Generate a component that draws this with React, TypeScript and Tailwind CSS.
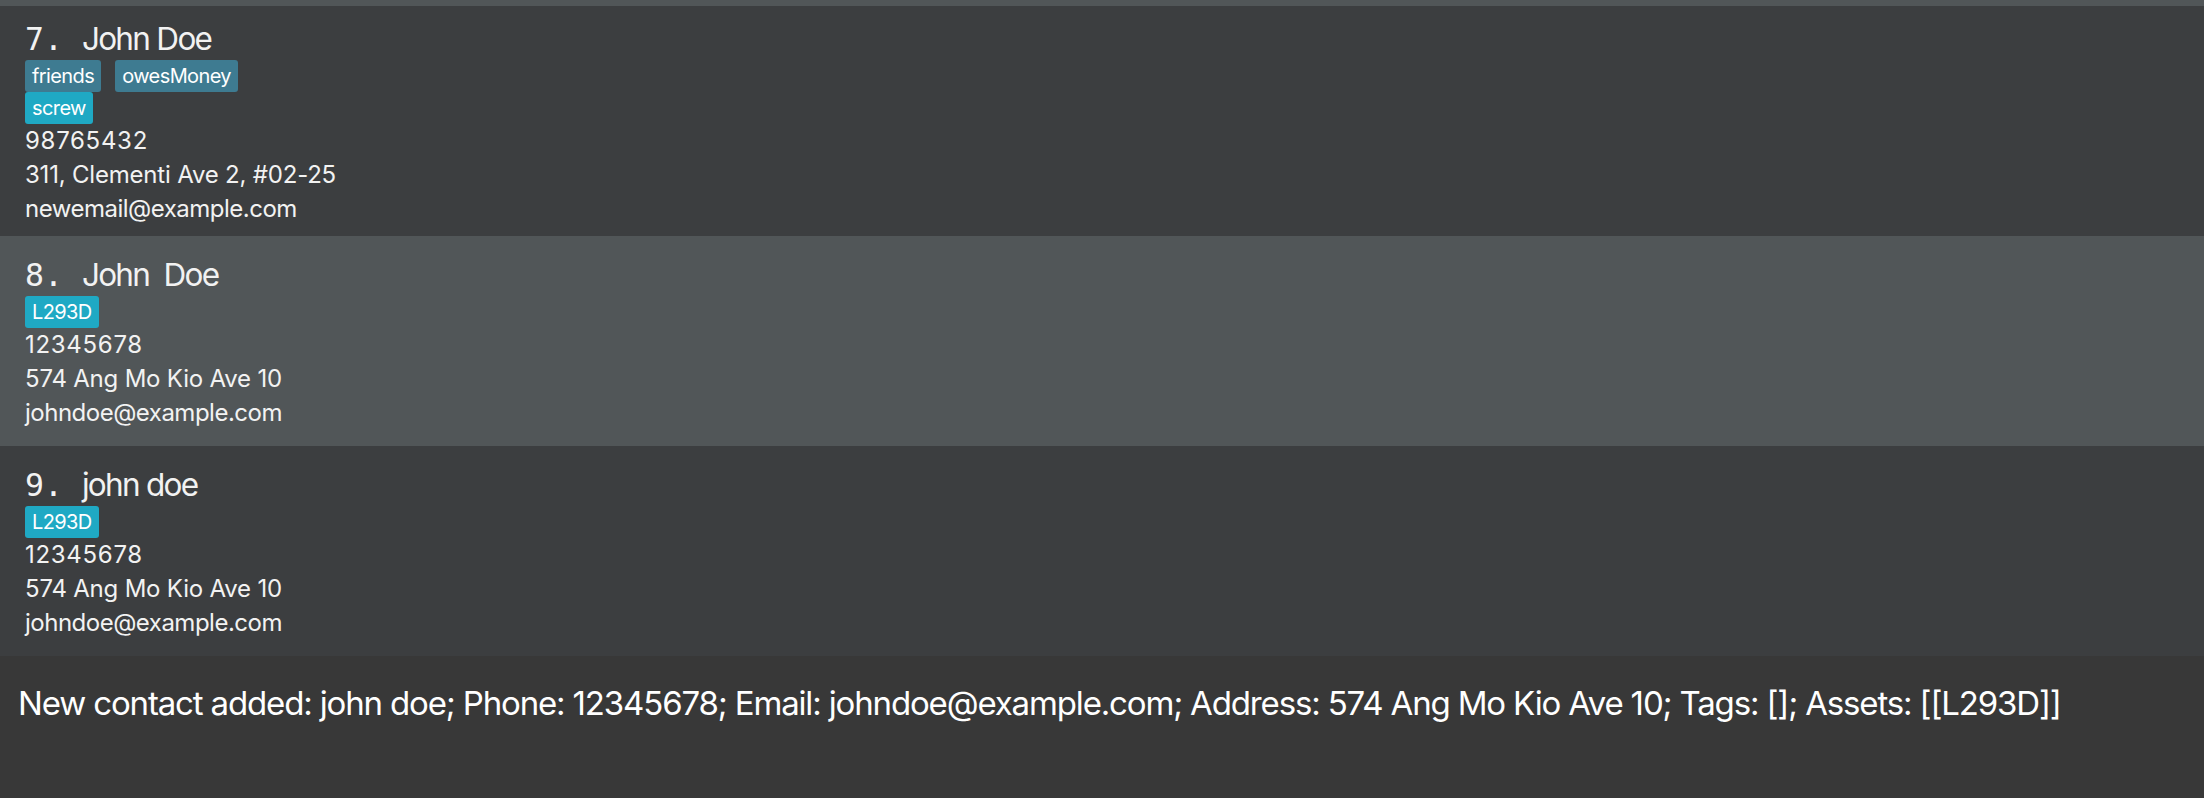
type Person = {
  id: number;
  name: string;
  tags: { label: string; kind: 'tag' | 'asset' }[][];
  phone: string;
  address: string;
  email: string;
};

const people: Person[] = [
  {
    id: 7,
    name: 'John Doe',
    tags: [
      [
        { label: 'friends', kind: 'tag' },
        { label: 'owesMoney', kind: 'tag' },
      ],
      [{ label: 'screw', kind: 'asset' }],
    ],
    phone: '98765432',
    address: '311, Clementi Ave 2, #02-25',
    email: 'newemail@example.com',
  },
  {
    id: 8,
    name: 'John  Doe',
    tags: [[{ label: 'L293D', kind: 'asset' }]],
    phone: '12345678',
    address: '574 Ang Mo Kio Ave 10',
    email: 'johndoe@example.com',
  },
  {
    id: 9,
    name: 'john doe',
    tags: [[{ label: 'L293D', kind: 'asset' }]],
    phone: '12345678',
    address: '574 Ang Mo Kio Ave 10',
    email: 'johndoe@example.com',
  },
];

const Tag = ({ label, kind }: { label: string; kind: 'tag' | 'asset' }) => (
  <span
    className={`h-[32px] px-[7px] rounded-[3px] text-[20px] leading-[32px] tracking-[-0.6px] text-white ${
      kind === 'tag' ? 'bg-[#3e7b91]' : 'bg-[#1fa9c4]'
    }`}
  >
    {label}
  </span>
);

const PersonCard = ({ person, index }: { person: Person; index: number }) => {
  const first = index === 0;
  return (
    <div
      className={`pl-[25px] ${index % 2 === 1 ? 'bg-[#515658]' : 'bg-[#3c3e40]'} ${
        first ? 'pt-[13px] pb-[10px]' : 'pt-[19px] pb-[16px]'
      }`}
    >
      {/* index + name */}
      <div className="h-[40px] text-[31.5px] leading-[40px] text-[#f2f2f2] whitespace-pre">
        <span className="font-['DejaVu_Sans_Mono',monospace]">{person.id}. </span>
        <span className="tracking-[-1.7px]">{person.name}</span>
      </div>
      <div className="mt-[1px] flex flex-col">
        {person.tags.map((row, i) => (
          <div key={i} className="flex gap-[14px]">
            {row.map((t) => (
              <Tag key={t.label} label={t.label} kind={t.kind} />
            ))}
          </div>
        ))}
      </div>
      <div className="text-[24px] leading-[34px] tracking-[-0.2px] text-[#f2f2f2]">
        <div className="tracking-[0.7px]">{person.phone}</div>
        <div>{person.address}</div>
        <div className="tracking-[-0.5px]">{person.email}</div>
      </div>
    </div>
  );
};

export default function App() {
  return (
    <div className="w-[2204px] h-[798px] flex flex-col overflow-hidden bg-[#383838] font-['Inter',sans-serif]">
      <div className="h-[6px] bg-[#515658]" />
      {people.map((p, i) => (
        <PersonCard key={p.id} person={p} index={i} />
      ))}
      {/* result display */}
      <div className="flex-1 pl-[18px] pt-[27px] text-[33px] leading-[40px] tracking-[-1.15px] text-white whitespace-nowrap">
        New contact added: john doe; Phone: 12345678; Email: johndoe@example.com; Address: 574 Ang Mo Kio Ave 10; Tags: []; Assets: [[L293D]]
      </div>
    </div>
  );
}
